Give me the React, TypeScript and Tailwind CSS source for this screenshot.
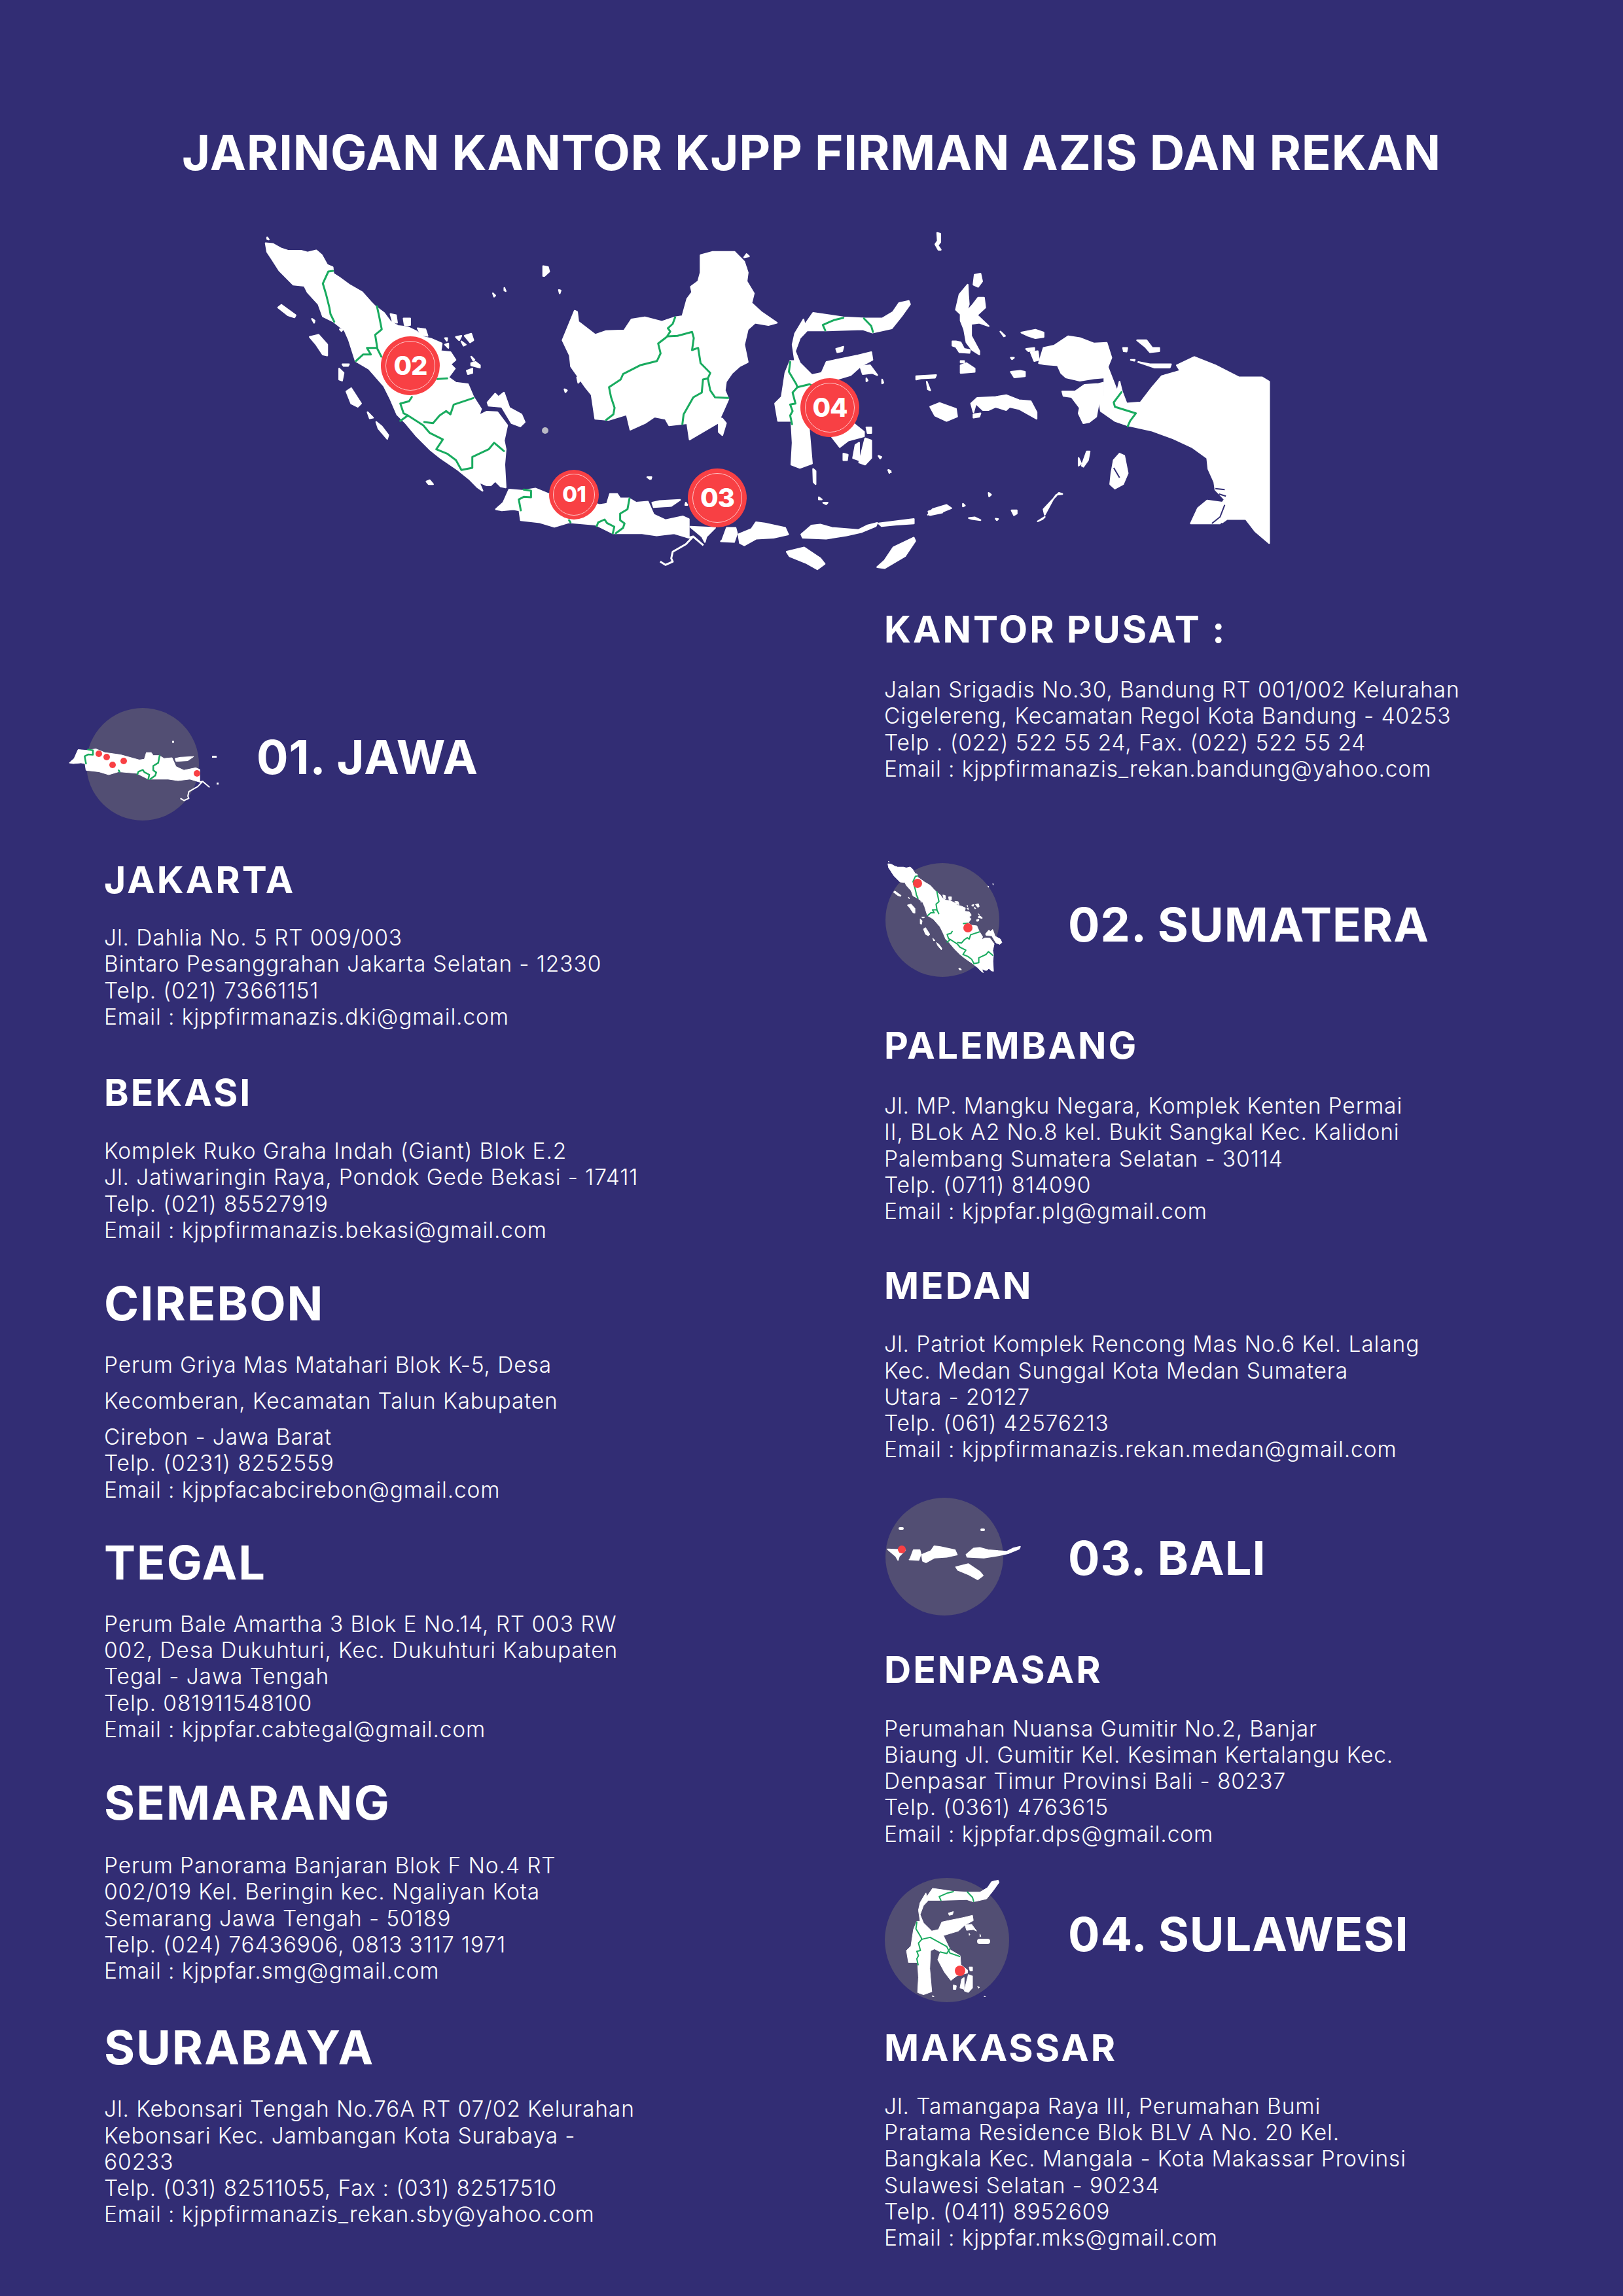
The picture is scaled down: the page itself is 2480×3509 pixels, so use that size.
import React from "react";

type Region = { land: string[]; borders: string[]; water?: string[] };

// traced from crops of the map, each crop has its own origin and scale
const trace = (x0: number, y0: number, sx: number, sy: number) => (s: string) =>
  s
    .trim()
    .split(/\s+/)
    .map((p) => {
      const [x, y] = p.split(",").map(Number);
      return `${(x0 + x / sx).toFixed(1)},${(y0 + y / sy).toFixed(1)}`;
    })
    .join(" ");

const a = trace(390, 350, 3, 3);
const b = trace(830, 370, 2.703, 3);
const c = trace(1400, 350, 2.8, 3);
const d = trace(740, 700, 2.24, 3);

const sumatra: Region = {
  land: [
    "48,65 80,68 120,90 150,100 210,100 240,108 280,98 305,120 330,165 355,175 358,205 385,222 430,255 490,290 530,335 550,355 590,385 620,425 655,445 700,450 740,470 770,495 810,505 855,525 850,560 895,565 918,600 895,620 915,640 885,680 920,705 975,712 1000,770 1035,825 1025,855 1060,838 1110,840 1155,900 1140,970 1148,1010 1142,1080 1148,1185 1125,1180 1100,1155 1080,1175 1060,1175 1025,1160 1042,1200 1020,1185 980,1145 930,1105 850,1050 800,1010 740,950 690,890 650,850 620,780 590,720 520,640 460,605 430,510 410,465 360,425 310,400 290,345 240,290 225,260 175,255 110,190 75,135 55,105",
    "105,360 120,348 185,395 180,405 150,395",
    "250,495 290,485 330,530 330,580 310,575 280,530",
    "385,640 405,660 398,695 385,690",
    "400,620 430,620 425,628 405,628",
    "418,745 440,730 485,800 470,815 440,800",
    "515,840 540,865 525,868",
    "555,885 580,905 610,945 605,962 565,915",
    "785,1158 800,1152 815,1170 795,1170",
    "620,390 645,395 650,430 630,425",
    "680,410 710,410 710,440 685,440",
    "745,455 780,460 790,490 760,485",
    "960,490 990,480 1000,510 985,520",
    "920,495 945,490 935,510",
    "970,650 995,640 995,660 975,665",
    "990,615 1010,610 1030,625 1030,635 990,625",
    "1065,795 1100,755 1115,770 1140,750 1165,820 1220,850 1235,885 1215,905 1175,890 1130,815 1070,810",
    "870,500 880,500 878,512",
    "870,530 885,525 885,545",
    "945,515 965,530 955,535",
    "1090,295 1100,305 1095,310",
    "1142,270 1148,285 1142,282",
    "55,38 62,48 55,46",
    "260,412 272,420 270,430",
    "388,460 400,462 395,468",
    "990,585 1005,600 1000,604",
  ].map(a),
  borders: [
    "356,192 335,195 310,250 325,300 340,360 345,390 362,425",
    "558,355 568,400 580,460 550,485 560,550 578,585",
    "462,605 495,575 530,575 512,545 555,545",
    "835,688 880,685",
    "718,770 705,790 665,800 680,845 700,855 770,900 800,935 860,965 830,1010 880,1030 920,1060 945,1105 995,1095 995,1045 1070,1010 1095,980 1140,1018",
    "1000,775 910,805 895,850 875,835 845,855 815,890 775,885",
    "700,855 665,880",
  ].map(a),
};

const kalimantan: Region = {
  land: [
    "130,315 140,320 145,365 180,395 215,425 260,408 335,405 365,355 420,345 490,365 545,345 575,340 595,260 615,230 610,205 640,180 650,140 650,60 700,45 790,45 830,90 845,140 840,180 870,235 860,280 900,320 965,370 930,380 875,370 845,400 830,470 845,550 810,570 780,600 755,640 750,680 765,720 745,770 720,830 605,905 595,830 520,840 505,810 460,800 420,830 360,860 345,790 270,815 215,810 200,700 175,665 140,610 115,570 110,520 80,450",
    "800,110 840,120 810,135",
    "840,55 850,65 830,70",
    "725,805 740,810 755,830 740,885 725,870",
    "140,620 165,620 145,645",
    "88,675 98,680 92,688",
    "0,110 20,115 25,135 5,155 0,155",
    "65,220 72,222 68,235",
    "430,1078 445,1078 440,1086",
  ].map(b),
  borders: [
    "545,345 535,375 515,395 525,410 510,435 475,465 485,510 470,545 400,565 330,605 320,630 272,665 280,710 295,760 290,790 260,815",
    "515,432 555,430 615,412 622,440 615,495 640,485 650,555 690,600 680,625 690,680 710,712 765,715",
    "680,625 660,630 655,690 620,712 580,790 575,835",
  ].map(b),
};

const sulawesi: Region = {
  land: [
    "1075,355 1080,380 1115,325 1180,335 1240,345 1330,350 1400,350 1445,320 1470,280 1510,270 1515,285 1480,340 1440,395 1360,415 1320,400 1170,405 1090,405 1060,440 1040,500 1060,555 1110,610 1150,600 1170,550 1210,540 1300,520 1355,505 1360,540 1310,570 1270,610 1180,640 1221,735 1281,774 1285,835 1325,870 1325,890 1260,910 1225,940 1187,885 1146,801 1162,750 1127,729 1103,741 1098,861 1110,1015 1060,1035 1025,1020 1030,920 1025,820 970,820 958,740 985,710 1000,600 1020,545 1040,545 1030,470 1040,420",
    "1210,490 1240,480 1235,500 1215,505",
    "1310,570 1350,565 1380,610 1360,600 1320,605",
    "1335,850 1355,850 1355,875 1340,875",
    "1330,900 1355,910 1355,990 1330,1020 1305,1010",
    "1290,930 1305,920 1305,1000 1280,990",
    "1240,970 1258,975 1255,1000 1240,1000",
    "1115,1040 1125,1050 1125,1110 1117,1100",
    "1385,980 1397,985 1392,992",
    "1425,1045 1435,1050 1430,1058",
    "1335,625 1340,635 1335,638",
    "1400,630 1405,645 1400,648",
  ].map(b),
  borders: [
    "1240,347 1200,358 1155,380 1165,405",
    "1325,350 1355,385 1362,412",
    "1020,550 1015,595 1045,650 1050,665 1100,652 1200,713 1219,757 1278,779",
    "1050,665 1030,690 1042,740 1020,745 1030,775 1020,795 1028,835",
    "1160,750 1200,760 1219,728",
  ].map(b),
};

const timur: Region = {
  land: [
    "170,370 185,300 220,255 222,300 225,345 215,380 240,350 265,315 290,315 295,360 260,395 310,445 270,430 235,435 235,490 270,560 270,575 240,555 215,520 205,460 190,420 190,390",
    "250,210 275,205 282,240 265,265 245,255",
    "90,18 103,22 103,60 92,75 105,95 95,95 82,70 92,55",
    "155,515 170,515 190,520 205,550 230,555 228,568 185,565 170,540 155,535",
    "190,625 215,615 250,640 250,655 190,660",
    "190,605 205,605 205,612 190,612",
    "0,675 85,670 80,682 20,685 0,690",
    "45,700 60,740 50,735",
    "60,815 100,798 170,825 175,860 130,880 80,855",
    "235,800 260,775 340,770 385,762 440,785 490,790 515,840 515,870 440,825 400,815 385,830 340,815 310,830 285,830 255,800 245,840",
    "245,850 275,845 270,860 245,865",
    "405,655 445,650 465,655 465,675 420,680",
    "450,475 510,462 545,475 545,495 510,500 480,490",
    "470,550 505,545 505,555 480,560",
    "490,565 520,560 525,600 505,605",
    "405,590 418,590 410,597",
    "360,470 380,490 375,492",
    "545,545 590,535 650,492 700,500 760,525 815,522 835,590 820,630 810,680 760,685 700,695 680,690 640,680 620,660 605,625 550,620 525,615",
    "625,745 680,745 720,715 780,710 800,705 800,770 780,800 770,860 740,885 715,890 695,845 700,820 665,770 630,765",
    "1190,587 1280,625 1380,680 1480,680 1510,700 1510,1440 1450,1385 1410,1330 1330,1330 1310,1345 1290,1340 1300,1350 1175,1350 1205,1280 1245,1245 1310,1255 1320,1240 1280,1195 1275,1160 1250,1100 1245,1050 1180,1000 1100,960 1010,925 905,900 850,880 790,835 785,800 805,765 805,680 820,635 860,745 870,700 880,745 900,800 960,795 1010,725 1050,675 1130,650 1115,625",
    "945,510 985,510 1010,545 1040,545 1040,560 1000,565 980,540",
    "950,610 1000,620 1090,620 1085,635 1020,635",
    "885,545 903,545 900,562 888,560",
    "918,600 935,600 933,604",
    "870,1030 890,1040 905,1120 885,1170 850,1190 830,1170 835,1120 845,1060",
    "730,1020 742,1020 735,1060 715,1090 708,1085",
    "695,1050 705,1075 695,1085",
    "610,1210 625,1215 600,1218 585,1240 550,1310 545,1285",
    "520,1340 550,1320 540,1330",
    "50,1310 70,1285 130,1265 150,1280 115,1295 60,1300",
    "310,1210 320,1218 312,1226",
    "200,1260 208,1268 200,1272",
    "225,1325 250,1322 275,1335 240,1330",
    "340,1328 350,1330 345,1335",
    "408,1290 430,1290 430,1305 418,1312",
  ].map(c),
  borders: ["878,748 845,795 850,815 940,845 915,880 905,905"].map(c),
  water: ["1320,1265 1300,1320 1265,1350", "845,1095 870,1140", "1280,1190 1320,1195", "1295,1215 1325,1225"].map(c),
};

const java: Region = {
  land: [
    "40,235 65,205 85,145 130,150 175,140 220,165 300,180 395,215 420,210 430,165 455,165 465,185 495,185 520,205 560,200 580,260 620,285 680,268 700,280 700,365 650,345 590,355 540,345 490,345 440,345 380,305 290,295 240,315 190,295 125,285 120,240 100,235 60,240",
    "575,205 600,197 670,192 640,220 580,225",
  ].map(d),
  borders: [
    "135,145 160,150 160,180 135,178 118,190 125,240",
    "290,285 295,295",
    "385,312 390,295 412,282 420,298 445,315 440,345",
    "497,185 490,235 465,255 465,285 480,300 475,320 450,345",
  ].map(d),
};

const nusa: Region = {
  land: [
    "705,315 790,320 760,360 755,385 745,360",
    "815,375 830,320 860,320 865,345 855,385 810,382",
    "870,350 915,325 930,295 960,300 1030,320 1040,350 990,365 930,370 890,400 875,390",
    "1085,350 1120,310 1150,305 1190,320 1280,330 1310,310 1345,298 1340,312 1290,340 1240,355 1170,370 1090,365",
    "1035,430 1095,410 1150,460 1165,485 1140,510 1100,480 1045,450",
  ].map(d),
  borders: [],
};

const lainnya: Region = {
  land: [
    "1350,300 1470,280 1470,300 1410,305 1360,312",
    "1370,470 1400,410 1470,365 1475,380 1440,450 1370,505 1345,500",
    "1520,245 1568,225 1568,250 1525,262",
    "1145,180 1155,190 1145,190",
    "1160,205 1175,205 1170,212",
    "560,88 572,88 570,96",
    "690,205 695,215 688,215",
    "1385,55 1392,65 1386,65",
  ].map(d),
  borders: [],
};

const sungai = d("700,365 715,360 690,395 645,430 640,460 645,475 620,490 602,475");
const sungai2 = d("715,360 750,400");

const Shapes = ({ region, line, edge }: { region: Region; line: number; edge: number }) => (
  <>
    {region.land.map((p) => (
      <polygon key={p} points={p} fill="#fff" stroke="#fff" strokeWidth={edge} strokeLinejoin="round" vectorEffect="non-scaling-stroke" />
    ))}
    {region.water?.map((p) => (
      <polyline key={p} points={p} fill="none" stroke="#322d74" strokeWidth={2} vectorEffect="non-scaling-stroke" />
    ))}
    {region.borders.map((p) => (
      <polyline key={p} points={p} fill="none" stroke="#19ab5f" strokeWidth={line} strokeLinejoin="round" strokeLinecap="round" vectorEffect="non-scaling-stroke" />
    ))}
  </>
);

const River = ({ width }: { width: number }) => (
  <>
    <polyline points={sungai} fill="none" stroke="#fff" strokeWidth={width} strokeLinejoin="round" vectorEffect="non-scaling-stroke" />
    <polyline points={sungai2} fill="none" stroke="#fff" strokeWidth={width} vectorEffect="non-scaling-stroke" />
  </>
);

const Badge = ({ label, className, ring, text }: { label: string; className: string; ring: string; text: string }) => (
  <div className={`absolute flex items-center justify-center rounded-full bg-[#f84044] font-extrabold tracking-[-1px] text-white ${className} ${text}`}>
    <span className={`absolute rounded-full border border-white/70 ${ring}`} />
    {label}
  </div>
);

const Dot = ({ className }: { className: string }) => <span className={`absolute rounded-full bg-[#f84044] ${className}`} />;

const RegionHeader = ({
  title,
  circle,
  gap,
  className,
  children,
}: {
  title: string;
  circle: string;
  gap: string;
  className: string;
  children: React.ReactNode;
}) => (
  <div className={`flex items-center ${className}`}>
    <div className={`relative shrink-0 rounded-full bg-[#524e73] ${circle}`}>{children}</div>
    <h2 className={`text-[72px] font-bold leading-[76px] tracking-[1px] whitespace-nowrap ${gap}`}>{title}</h2>
  </div>
);

const Office = ({
  name,
  lines,
  big,
  top,
  bodyTop,
}: {
  name: string;
  lines: string[];
  big?: boolean;
  top: string;
  bodyTop: string;
}) => (
  <div className={top}>
    {big ? (
      <h3 className="text-[72px] font-bold leading-[76px] tracking-[2px]">{name}</h3>
    ) : (
      <h3 className="text-[57px] font-bold leading-[60px] tracking-[3px]">{name}</h3>
    )}
    <div className={`text-[33.5px] font-light leading-[40.25px] tracking-[0.9px] ${bodyTop}`}>
      {lines.map((l) => (
        <p key={l} className="whitespace-nowrap">
          {l}
        </p>
      ))}
    </div>
  </div>
);

export default function App() {
  return (
    <div className="h-[3509px] w-[2480px] overflow-hidden bg-[#322d74] text-white [font-family:Inter,sans-serif]">
      <h1 className="h-[340px] pt-[190px] text-center text-[74px] font-bold leading-[86px] tracking-[0.8px]">
        JARINGAN KANTOR KJPP FIRMAN AZIS DAN REKAN
      </h1>

      {/* peta indonesia */}
      <div className="relative ml-[380px] h-[560px] w-[1600px]">
        <svg viewBox="380 340 1600 560" className="h-[560px] w-[1600px]">
          <Shapes region={sumatra} line={3} edge={2.5} />
          <Shapes region={kalimantan} line={3} edge={2.5} />
          <Shapes region={sulawesi} line={3} edge={2.5} />
          <Shapes region={timur} line={3} edge={2.5} />
          <Shapes region={java} line={3} edge={2.5} />
          <Shapes region={nusa} line={3} edge={2.5} />
          <Shapes region={lainnya} line={3} edge={2.5} />
          <River width={3} />
          <circle cx="833" cy="658" r="5" fill="#b9b9c4" />
        </svg>
        <Badge label="02" className="left-[202px] top-[174px] h-[90px] w-[90px]" ring="inset-[7px]" text="text-[40px]" />
        <Badge label="01" className="left-[459px] top-[378px] h-[76px] w-[76px]" ring="inset-[6px]" text="text-[33px]" />
        <Badge label="03" className="left-[671px] top-[376px] h-[90px] w-[90px]" ring="inset-[7px]" text="text-[40px]" />
        <Badge label="04" className="left-[843px] top-[238px] h-[90px] w-[90px]" ring="inset-[7px]" text="text-[40px]" />
      </div>

      <div className="flex">
        {/* kolom kiri */}
        <div className="w-[1351px] pl-[159px]">
          <RegionHeader title="01. JAWA" circle="-ml-[27px] h-[172px] w-[172px]" gap="ml-[88px] pb-[22px]" className="mt-[182px]">
            <svg viewBox="750 740 340 130" className="absolute left-[-32px] top-[58px] h-[88px] w-[231px]">
              <Shapes region={java} line={2.5} edge={1} />
              <River width={2} />
            </svg>
            <Dot className="left-[14px] top-[65px] h-[10px] w-[10px]" />
            <Dot className="left-[26px] top-[70px] h-[10px] w-[10px]" />
            <Dot className="left-[35px] top-[82px] h-[10px] w-[10px]" />
            <Dot className="left-[52px] top-[76px] h-[10px] w-[10px]" />
            <Dot className="left-[164px] top-[95px] h-[10px] w-[10px]" />
            <span className="absolute left-[131px] top-[50px] h-[3px] w-[3px] bg-white" />
            <span className="absolute left-[192px] top-[73px] h-[3px] w-[7px] bg-white" />
            <span className="absolute left-[199px] top-[114px] h-[3px] w-[3px] bg-white" />
          </RegionHeader>
          <Office
            name="JAKARTA"
            top="mt-[61px]"
            bodyTop="mt-[38px]"
            lines={["Jl. Dahlia No. 5 RT 009/003", "Bintaro Pesanggrahan Jakarta Selatan - 12330", "Telp. (021) 73661151", "Email : kjppfirmanazis.dki@gmail.com"]}
          />
          <Office
            name="BEKASI"
            top="mt-[66px]"
            bodyTop="mt-[39px]"
            lines={["Komplek Ruko Graha Indah (Giant) Blok E.2", "Jl. Jatiwaringin Raya, Pondok Gede Bekasi - 17411", "Telp. (021) 85527919", "Email : kjppfirmanazis.bekasi@gmail.com"]}
          />
          <div className="mt-[54px]">
            <h3 className="text-[72px] font-bold leading-[76px] tracking-[2px]">CIREBON</h3>
            <div className="mt-[29px] text-[33.5px] font-light leading-[55px] tracking-[0.9px]">
              <p>Perum Griya Mas Matahari Blok K-5, Desa</p>
              <p>Kecomberan, Kecamatan Talun Kabupaten</p>
            </div>
            <div className="mt-[7px] text-[33.5px] font-light leading-[40.25px] tracking-[0.9px]">
              <p>Cirebon - Jawa Barat</p>
              <p>Telp. (0231) 8252559</p>
              <p>Email : kjppfacabcirebon@gmail.com</p>
            </div>
          </div>
          <Office
            name="TEGAL"
            big
            top="mt-[53px]"
            bodyTop="mt-[36px]"
            lines={["Perum Bale Amartha 3 Blok E No.14, RT 003 RW", "002, Desa Dukuhturi, Kec. Dukuhturi Kabupaten", "Tegal - Jawa Tengah", "Telp. 081911548100", "Email : kjppfar.cabtegal@gmail.com"]}
          />
          <Office
            name="SEMARANG"
            big
            top="mt-[54px]"
            bodyTop="mt-[38px]"
            lines={["Perum Panorama Banjaran Blok F No.4 RT", "002/019 Kel. Beringin kec. Ngaliyan Kota", "Semarang Jawa Tengah - 50189", "Telp. (024) 76436906, 0813 3117 1971", "Email : kjppfar.smg@gmail.com"]}
          />
          <Office
            name="SURABAYA"
            big
            top="mt-[59px]"
            bodyTop="mt-[36px]"
            lines={["Jl. Kebonsari Tengah No.76A RT 07/02 Kelurahan", "Kebonsari Kec. Jambangan Kota Surabaya -", "60233", "Telp. (031) 82511055, Fax : (031) 82517510", "Email : kjppfirmanazis_rekan.sby@yahoo.com"]}
          />
        </div>

        {/* kolom kanan */}
        <div className="flex-1">
          <Office
            name="KANTOR PUSAT :"
            top="mt-[32px]"
            bodyTop="mt-[42px]"
            lines={["Jalan Srigadis No.30, Bandung RT 001/002 Kelurahan", "Cigelereng, Kecamatan Regol Kota Bandung - 40253", "Telp . (022) 522 55 24, Fax. (022) 522 55 24", "Email : kjppfirmanazis_rekan.bandung@yahoo.com"]}
          />
          <RegionHeader title="02. SUMATERA" circle="ml-[2px] h-[174px] w-[174px]" gap="ml-[105px] pt-[14px]" className="mt-[124px]">
            <svg viewBox="400 360 420 400" className="absolute left-[1px] top-[-4px] h-[176px] w-[185px]">
              <Shapes region={sumatra} line={2} edge={1} />
            </svg>
            <Dot className="left-[42px] top-[24px] h-[14px] w-[14px]" />
            <Dot className="left-[119px] top-[92px] h-[14px] w-[14px]" />
          </RegionHeader>
          <Office
            name="PALEMBANG"
            top="mt-[75px]"
            bodyTop="mt-[42px]"
            lines={["Jl. MP. Mangku Negara, Komplek Kenten Permai", "II, BLok A2 No.8 kel. Bukit Sangkal Kec. Kalidoni", "Palembang Sumatera Selatan - 30114", "Telp. (0711) 814090", "Email : kjppfar.plg@gmail.com"]}
          />
          <Office
            name="MEDAN"
            top="mt-[64px]"
            bodyTop="mt-[39px]"
            lines={["Jl. Patriot Komplek Rencong Mas No.6 Kel. Lalang", "Kec. Medan Sunggal Kota Medan Sumatera", "Utara - 20127", "Telp. (061) 42576213", "Email : kjppfirmanazis.rekan.medan@gmail.com"]}
          />
          <RegionHeader title="03. BALI" circle="ml-[2px] h-[180px] w-[180px]" gap="ml-[99px] pt-[4px]" className="mt-[53px]">
            <svg viewBox="1050 780 295 100" className="absolute left-[0px] top-[61px] h-[71px] w-[209px]">
              <Shapes region={nusa} line={2} edge={2} />
            </svg>
            <Dot className="left-[19px] top-[73px] h-[12px] w-[12px]" />
            <span className="absolute left-[20px] top-[45px] h-[4px] w-[8px] rounded-full bg-white" />
            <span className="absolute left-[145px] top-[47px] h-[4px] w-[7px] rounded-full bg-white" />
          </RegionHeader>
          <Office
            name="DENPASAR"
            top="mt-[53px]"
            bodyTop="mt-[40px]"
            lines={["Perumahan Nuansa Gumitir No.2, Banjar", "Biaung Jl. Gumitir Kel. Kesiman Kertalangu Kec.", "Denpasar Timur Provinsi Bali - 80237", "Telp. (0361) 4763615", "Email : kjppfar.dps@gmail.com"]}
          />
          <RegionHeader title="04. SULAWESI" circle="ml-[1px] h-[190px] w-[190px]" gap="ml-[90px] pb-[18px]" className="mt-[47px]">
            <svg viewBox="1180 455 240 265" className="absolute left-[30px] top-[0px] h-[182px] w-[165px]">
              <Shapes region={sulawesi} line={2} edge={1} />
            </svg>
            <Dot className="left-[107px] top-[134px] h-[16px] w-[16px]" />
            <span className="absolute left-[141px] top-[93px] h-[8px] w-[20px] rounded-full bg-white" />
          </RegionHeader>
          <Office
            name="MAKASSAR"
            top="mt-[40px]"
            bodyTop="mt-[39px]"
            lines={["Jl. Tamangapa Raya III, Perumahan Bumi", "Pratama Residence Blok BLV A No. 20 Kel.", "Bangkala Kec. Mangala - Kota Makassar Provinsi", "Sulawesi Selatan - 90234", "Telp. (0411) 8952609", "Email : kjppfar.mks@gmail.com"]}
          />
        </div>
      </div>
    </div>
  );
}
